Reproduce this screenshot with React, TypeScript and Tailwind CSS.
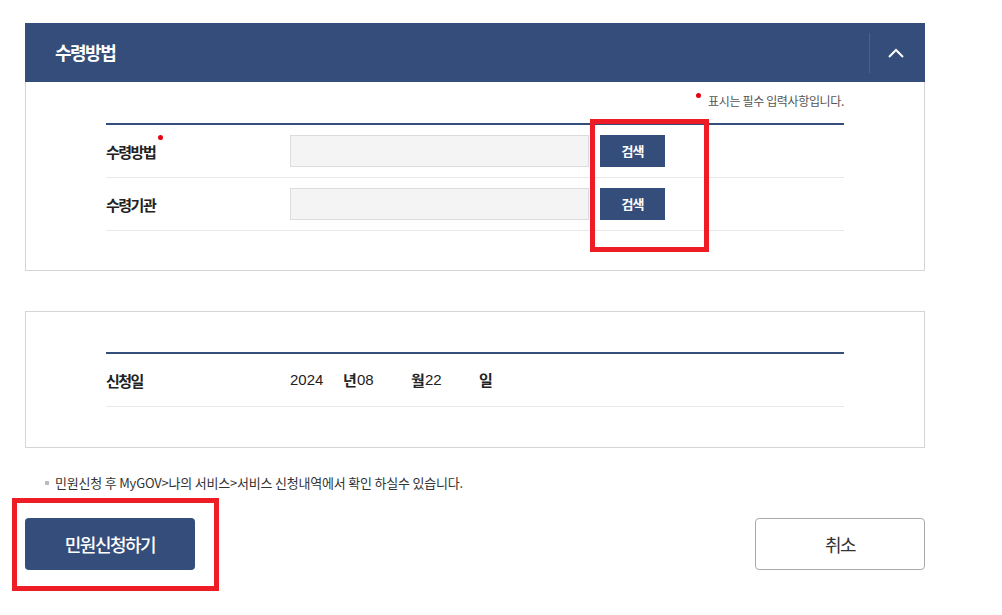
import React from "react";

const KR = "font-['Noto_Sans_CJK_KR','Noto_Sans',sans-serif]";

function FormRow({
  label,
  required,
  children,
}: {
  label: string;
  required?: boolean;
  children: React.ReactNode;
}) {
  return (
    <div className="flex items-center h-[53px] border-b border-[#e8e8e8]">
      <div className="w-[184px] shrink-0">
        <span className="relative text-[15px] font-bold text-[#222] tracking-[-1.5px]">
          {label}
          {required && (
            <span className="absolute -right-[8px] -top-[6px] w-[5px] h-[5px] rounded-full bg-[#e60012]" />
          )}
        </span>
      </div>
      {children}
    </div>
  );
}

function SearchField() {
  return (
    <div className="flex items-center gap-x-[11px]">
      <input
        type="text"
        readOnly
        className="w-[299px] h-[32px] bg-[#f4f4f4] border border-[#dcdcdc] outline-none"
      />
      <button
        type="button"
        className="w-[65px] h-[32px] bg-[#344d7a] text-white text-[13px] font-bold tracking-[-1px]"
      >
        검색
      </button>
    </div>
  );
}

export default function App() {
  return (
    <div className={`relative w-[1002px] h-[615px] bg-white ${KR}`}>
      <div className="ml-[25px] w-[900px] pt-[23px]">
        {/* 수령방법 panel */}
        <section>
          <div className="flex items-center h-[59px] bg-[#344d7a]">
            <h2 className="flex-1 pl-[30px] text-white text-[18px] font-bold tracking-[-1.5px]">
              수령방법
            </h2>
            <div className="w-px h-[40px] bg-[#4b628f]" />
            <button type="button" className="w-[55px] h-full pr-[4px] flex items-center justify-center">
              <svg width="16" height="10" viewBox="0 0 16 10" fill="none">
                <path d="M1 9 L8 2 L15 9" stroke="white" strokeWidth="2" />
              </svg>
            </button>
          </div>
          <div className="border border-t-0 border-[#d5d5d5] pl-[80px] pr-[80px] pt-[10px] pb-[39px]">
            <p className="flex justify-end items-start h-[18px] mb-[13px] text-[12px] leading-[18px] text-[#555] tracking-[-0.35px]">
              <span className="w-[5px] h-[5px] rounded-full bg-[#e60012] mr-[7px] mt-[1px]" />
              표시는 필수 입력사항입니다.
            </p>
            <div className="border-t-2 border-[#344d7a]">
              <FormRow label="수령방법" required>
                <SearchField />
              </FormRow>
              <FormRow label="수령기관">
                <SearchField />
              </FormRow>
            </div>
          </div>
        </section>

        {/* 신청일 panel */}
        <section className="mt-[40px] border border-[#d5d5d5] pl-[80px] pr-[80px] pt-[40px] pb-[40px]">
          <div className="border-t-2 border-[#344d7a]">
            <FormRow label="신청일">
              <div className="flex items-center text-[15px] text-[#222] font-['Liberation_Sans','Noto_Sans_CJK_KR',sans-serif]">
                <span className="w-[53px]">2024</span>
                <span className={`w-[14px] font-bold ${KR}`}>년</span>
                <span className="w-[54px]">08</span>
                <span className={`w-[14px] font-bold ${KR}`}>월</span>
                <span className="w-[54px]">22</span>
                <span className={`font-bold ${KR}`}>일</span>
              </div>
            </FormRow>
          </div>
        </section>

        <p className="flex items-center mt-[26px] pl-[20px] text-[13px] text-[#333] tracking-[-0.2px] leading-[18px]">
          <span className="w-[4px] h-[4px] bg-[#bbbbbb] mr-[6px]" />
          민원신청 후 MyGOV&gt;나의 서비스&gt;서비스 신청내역에서 확인 하실수 있습니다.
        </p>

        <div className="flex justify-between mt-[26px]">
          <button
            type="button"
            className="w-[170px] h-[52px] rounded-[4px] bg-[#344d7a] text-white text-[18px] font-medium tracking-[-1.5px]"
          >
            민원신청하기
          </button>
          <button
            type="button"
            className="w-[170px] h-[52px] rounded-[4px] border border-[#aaaaaa] bg-white text-[#333] text-[18px] tracking-[-1.5px]"
          >
            취소
          </button>
        </div>
      </div>

      {/* annotation boxes */}
      <div className="absolute left-[590px] top-[119px] w-[119px] h-[133px] border-[5px] border-[#ee1c25] pointer-events-none" />
      <div className="absolute left-[12px] top-[498px] w-[207px] h-[93px] border-[5px] border-[#ee1c25] pointer-events-none" />
    </div>
  );
}
